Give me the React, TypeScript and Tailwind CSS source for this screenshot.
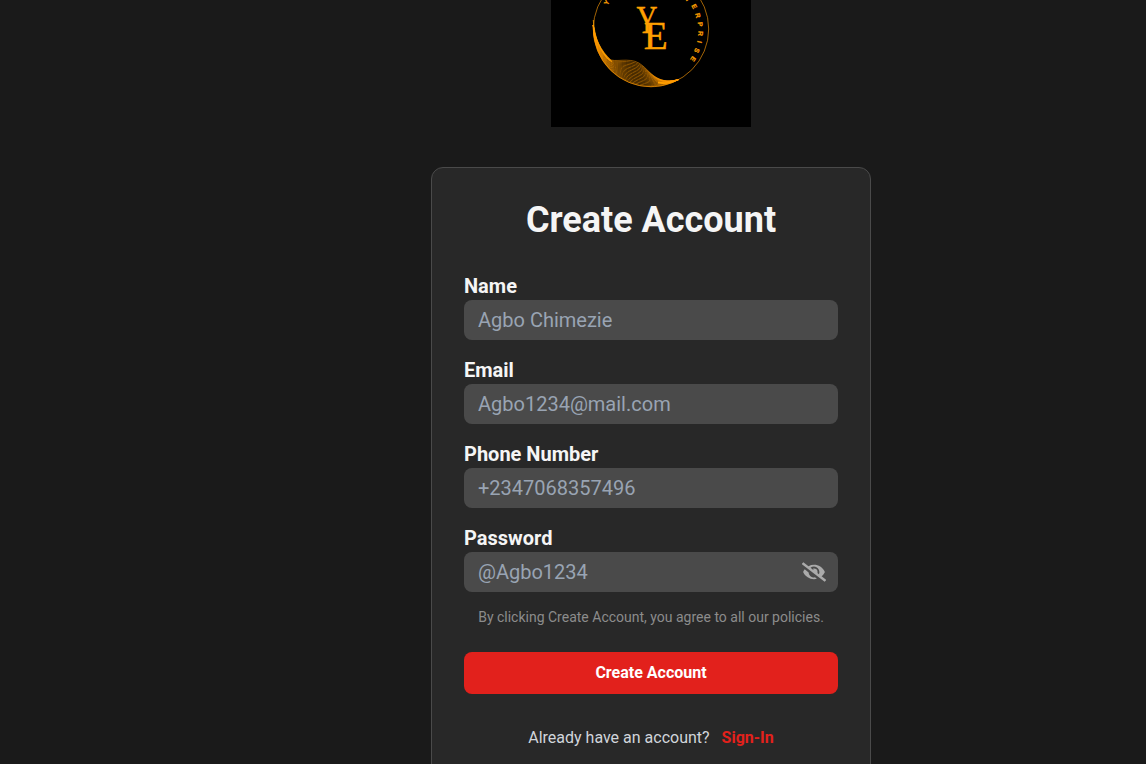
import { useState } from "react";
import { FaEyeSlash, FaEye } from "react-icons/fa";

const OUTER = [42.3, 25, 42, 43, 48.4, 59, 59.2, 69.8, 70, 80.6, 84.7, 86.7, 100, 86.7, 109.1, 86.7, 118.1, 84.6, 128, 79.4];
const INNER = [42.3, 25, 43.5, 38, 50, 51, 60, 60, 68, 62, 82, 56.5, 92, 66, 101, 74, 108, 85, 128, 79.4];

function strand(t: number) {
  const p = OUTER.map((v, i) => (v + (INNER[i] - v) * t).toFixed(2));
  return `M${p[0]} ${p[1]}C${p.slice(2).join(" ")}`;
}

const STRANDS = Array.from({ length: 17 }, (_, i) => strand(i / 16));

const RIM: [string, number, number, number][] = [
  ["Y", 55.5, 2.5, -60],
  ["T", 137, -0.8, 50],
  ["E", 143.3, 6.5, 63],
  ["R", 147, 15.3, 74],
  ["P", 149.2, 24.3, 85],
  ["R", 149.6, 33.5, 95],
  ["I", 148.6, 42, 105],
  ["S", 146, 50.5, 115],
  ["E", 142.2, 58.8, 125],
];

function Logo() {
  return (
    <svg width="200" height="127" viewBox="0 0 200 127" className="block shrink-0 bg-black" fill="none">
      <circle cx="100" cy="29" r="57.7" stroke="#c97b08" strokeWidth="0.8" />
      {STRANDS.map((d) => (
        <path key={d} d={d} stroke="#ff9800" strokeWidth="0.6" strokeOpacity="0.9" />
      ))}
      <path d="M42.3 20C42.6 37 49 51 61 61.5C57 61.5 44.5 48 42.3 20Z" fill="#ffa000" stroke="#ffa000" strokeWidth="0.5" />
      <path d="M107 81.5C113 83 119 82.5 128 79.4C119 84 113 84.5 107 83.5Z" fill="#ffa000" />
      <g fill="#ffa000" stroke="#ffa000" strokeWidth="0.45" fontFamily="'Liberation Serif', serif">
        <text x="85.5" y="33" fontSize="40" textLength="21" lengthAdjust="spacingAndGlyphs">Y</text>
        <text x="92.7" y="49.3" fontSize="41" textLength="24" lengthAdjust="spacingAndGlyphs">E</text>
      </g>
      <g fill="#ffa000" stroke="#ffa000" strokeWidth="0.25" fontFamily="'Liberation Sans', sans-serif" fontSize="6.6" fontWeight="700" textAnchor="middle">
        {RIM.map(([c, x, y, a]) => (
          <text key={`${c}${y}`} transform={`translate(${x} ${y}) rotate(${a})`} y="2.3">{c}</text>
        ))}
      </g>
    </svg>
  );
}

const INPUT = "block h-10 w-full rounded-lg bg-[#4a4a4a] px-3.5 text-xl text-white placeholder-[#99a4b3] outline-none";

function Field({ label, placeholder, type = "text" }: { label: string; placeholder: string; type?: string }) {
  return (
    <label className="block">
      <span className="block text-xl font-bold text-[#f5f5f5]">{label}</span>
      <input type={type} placeholder={placeholder} className={INPUT} />
    </label>
  );
}

export default function App() {
  const [visible, setVisible] = useState(false);
  return (
    <div className="flex h-screen flex-col items-center overflow-hidden bg-[#1a1a1a] pl-[156px] font-['Roboto',sans-serif]">
      <Logo />
      <main className="mt-10 h-[640px] w-[440px] shrink-0 rounded-xl border border-[#4a4a4a] bg-[#282828] px-8 pt-8">
        <h1 className="text-center text-4xl leading-10 font-bold text-[#f5f5f5]">Create Account</h1>
        <form className="mt-8 flex flex-col gap-4" onSubmit={(e) => e.preventDefault()}>
          <Field label="Name" placeholder="Agbo Chimezie" />
          <Field label="Email" placeholder="Agbo1234@mail.com" type="email" />
          <Field label="Phone Number" placeholder="+2347068357496" />
          <div className="relative">
            <Field label="Password" placeholder="@Agbo1234" type={visible ? "text" : "password"} />
            <button type="button" aria-label="Toggle password" onClick={() => setVisible(!visible)} className="absolute right-3 bottom-2 text-2xl text-[#aaaaaa]">
              {visible ? <FaEye /> : <FaEyeSlash />}
            </button>
          </div>
          <p className="-mt-px mb-px text-center text-sm text-[#8c8c8c]">By clicking Create Account, you agree to all our policies.</p>
          <button className="mt-2 h-[42px] rounded-lg bg-[#e2211c] text-base font-bold text-white">Create Account</button>
        </form>
        <p className="mt-8 flex justify-center gap-3 text-base text-[#d1d5db]">
          Already have an account?
          <a href="#signin" className="font-bold text-[#e2211c]">Sign-In</a>
        </p>
      </main>
    </div>
  );
}
